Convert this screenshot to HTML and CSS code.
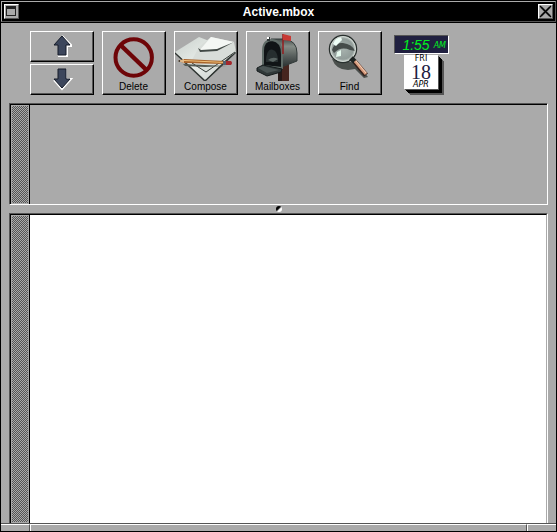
FILE: index.html
```html
<!DOCTYPE html>
<html lang="en">
<head>
    <meta charset="UTF-8">
    <meta name="viewport" content="width=device-width, initial-scale=1.0">
    <title>Active.mbox</title>
    <link rel="stylesheet" href="styles.css">
</head>
<body>
    <div class="window">
        <header class="titlebar">
            <button class="title-button" type="button" aria-label="Miniaturize">
                <svg width="13" height="13" viewBox="0 0 13 13">
                    <path d="M1 1h10v10H1z" fill="#222"/>
                    <path d="M2 4h8v6H2z" fill="#aaa"/>
                </svg>
            </button>
            <h1>Active.mbox</h1>
            <button class="title-button" type="button" aria-label="Close">
                <svg width="13" height="13" viewBox="0 0 13 13">
                    <path d="M2 2l9 9M11 2l-9 9" stroke="#555" stroke-width="2.4"/>
                    <path d="M1 1l11 11M12 1L1 12" stroke="#000" stroke-width="1.2"/>
                </svg>
            </button>
        </header>

        <div class="toolbar">
            <div class="arrows">
                <button class="tool arrow" type="button" aria-label="Previous message">
                    <svg width="61" height="28" viewBox="0 0 61 28">
                        <path d="M31 4l9 9v1h-4v10h-9" fill="none" stroke="#fff" stroke-width="2"/>
                        <path d="M31 4l8 9h-4v10h-8V13h-4z" fill="#3c465c" stroke="#151b28"/>
                    </svg>
                </button>
                <button class="tool arrow" type="button" aria-label="Next message">
                    <svg width="61" height="28" viewBox="0 0 61 28">
                        <path d="M35 4v10h5l-9 10-8-9" fill="none" stroke="#fff" stroke-width="2"/>
                        <path d="M27 4h8v10h4l-8 9-8-9h4z" fill="#3c465c" stroke="#151b28"/>
                    </svg>
                </button>
            </div>

            <button class="tool" type="button">
                <svg width="61" height="48" viewBox="0 0 61 48">
                    <circle cx="30.7" cy="24.5" r="18.2" fill="none" stroke="#6e0508" stroke-width="4"/>
                    <path d="M18 12.500L43.500 37" stroke="#6e0508" stroke-width="4.500"/>
                </svg>
                <span>Delete</span>
            </button>

            <button class="tool" type="button">
                <svg width="61" height="48" viewBox="0 0 61 48">
                    <defs>
                        <linearGradient id="paper" x1="0" y1="0" x2="1" y2="1">
                            <stop offset="0" stop-color="#c9d0cc"/>
                            <stop offset=".5" stop-color="#e9eeea"/>
                            <stop offset="1" stop-color="#c3c8c5"/>
                        </linearGradient>
                    </defs>
                    <path d="M0 21L30 49 61 20V17L31 46 0 19z" fill="#303633"/>
                    <path d="M0 19L24 4 60 18 30 47z" fill="url(#paper)"/>
                    <path d="M24 14L36 4 59 9 61 19 31 40 17 27z" fill="#d8ddd9"/>
                    <path d="M17 30l14 9 29-20" fill="none" stroke="#333a36"/>
                    <path d="M36 4L59 9 45 16 24 18z" fill="#f4f7f4"/>
                    <path d="M23 15l2 4 17-1 17-9-17 7-16 1z" fill="#414945"/>
                    <path d="M8 31l44 2-22 1-20-1z" fill="#545b55"/>
                    <path d="M3 28l6-2 41 2v3L9 30z" fill="#a8642b"/>
                    <path d="M9 27l41 2v1L9 28z" fill="#f0c07a"/>
                    <path d="M3 28l6-2v4z" fill="#deb98c"/>
                    <path d="M3 28l2-1v2z" fill="#222"/>
                    <path d="M48 28h3v4h-3z" fill="#53606e"/>
                    <path d="M51 28h5q2 2 0 4h-5z" fill="#a3282d"/>
                </svg>
                <span>Compose</span>
            </button>

            <button class="tool" type="button">
                <svg width="61" height="48" viewBox="0 0 61 48">
                    <defs>
                        <linearGradient id="metal" x1="0" y1="0" x2="0" y2="1">
                            <stop offset="0" stop-color="#464e4c"/>
                            <stop offset=".25" stop-color="#858c86"/>
                            <stop offset=".6" stop-color="#565d5b"/>
                            <stop offset="1" stop-color="#252c2d"/>
                        </linearGradient>
                    </defs>
                    <path d="M31 33l11-4v19H31z" fill="#46251f"/>
                    <path d="M31 33h4v15h-4z" fill="#251817"/>
                    <path d="M24 6h14q12 2 12 14v8l-18 7-3-20z" fill="url(#metal)" stroke="#333b3a"/>
                    <path d="M16 33V18Q16 7 25 7q10 1 10 14v14z" fill="#101416" stroke="#606c68" stroke-width="2"/>
                    <path d="M19 29c0-9 3-14 7-12 4 1 5 6 5 12z" fill="#262e2f"/>
                    <path d="M21 27q5-4 10-1l-5 3z" fill="#596462"/>
                    <path d="M10 35l6-3 19 4-1 3-14 4-10-5z" fill="#303839" stroke="#151b1c"/>
                    <path d="M11 35l5-2 16 4-12 3z" fill="#4a5454"/>
                    <path d="M36 1v20" stroke="#941d1e" stroke-width="1.500"/>
                    <path d="M36 1l8 2v5l-8-1z" fill="#c83a35"/>
                    <path d="M20 4h3v4h-3z" fill="#303838"/>
                    <path d="M20 4h2v2h-2z" fill="#fff"/>
                </svg>
                <span>Mailboxes</span>
            </button>

            <button class="tool" type="button">
                <svg width="61" height="48" viewBox="0 0 61 48">
                    <defs>
                        <radialGradient id="lens">
                            <stop offset="0" stop-color="#a7b2ae"/>
                            <stop offset=".75" stop-color="#919c99"/>
                            <stop offset="1" stop-color="#d8dfda"/>
                        </radialGradient>
                    </defs>
                    <path d="M13 26q4 11 16 11l7-1 9 9 4-1-11-14z" fill="#4b504d"/>
                    <circle cx="24" cy="16" r="13.500" fill="url(#lens)" stroke="#29302e" stroke-width="1.500"/>
                    <path d="M13 17q2-8 11-7 9 1 12 8l-5-1q-9-4-16 3z" fill="#454c4a"/>
                    <path d="M14 11q2-6 8-7l1 3-6 6z" fill="#effff7"/>
                    <path d="M18 19l4-2v6l-5 1z" fill="#e4f8ed"/>
                    <circle cx="24" cy="16" r="12.500" fill="none" stroke="#d0d8d3"/>
                    <path d="M32 25l4 4" stroke="#1d2322" stroke-width="5"/>
                    <path d="M36 29l11 13" stroke="#35201b" stroke-width="5"/>
                    <path d="M36 28l11 13" stroke="#d79a7b" stroke-width="3"/>
                    <path d="M37 28l10 12" stroke="#f1d0b8"/>
                </svg>
                <span>Find</span>
            </button>

            <div class="clock">
                <div class="time"><span class="digits">1:55</span><span class="ampm">AM</span></div>
                <div class="calendar">
                    <span class="weekday">FRI</span>
                    <span class="day">18</span>
                    <span class="month">APR</span>
                </div>
            </div>
        </div>

        <main class="panes">
            <section class="pane message-list" aria-label="Message list">
                <div class="scroller"></div>
                <div class="content"></div>
            </section>
            <div class="splitter"><span class="knob"></span></div>
            <section class="pane message-body" aria-label="Message">
                <div class="scroller"></div>
                <div class="content"></div>
            </section>
        </main>

        <footer class="resize-bar">
            <div class="corner"></div>
            <div class="middle"></div>
            <div class="corner"></div>
        </footer>
    </div>
</body>
</html>
```
FILE: styles.css
```css
* {
    box-sizing: border-box;
}
body {
    margin: 0;
    font-family: "Liberation Sans", Arial, sans-serif;
    color: #000;
}
svg {
    display: block;
}
.window {
    display: flex;
    flex-direction: column;
    min-height: 100vh;
    background-color: #aaa;
    border: 1px solid #000;
}

/* Title bar */
.titlebar {
    display: flex;
    align-items: center;
    justify-content: space-between;
    height: 21px;
    margin-bottom: 1px;
    padding: 0 2px;
    background-color: #000;
    border: 1px solid #555;
    border-top-color: #aaa;
    border-left-color: #aaa;
    box-shadow: 0 1px 0 #000;
}
.titlebar h1 {
    margin: 0;
    font-size: 12px;
    line-height: 16px;
    color: #fff;
}
.title-button {
    width: 15px;
    height: 15px;
    padding: 0;
    background-color: #aaa;
    border: 1px solid #555;
    border-top-color: #fff;
    border-left-color: #fff;
}

/* Toolbar */
.toolbar {
    display: flex;
    gap: 8px;
    padding: 8px 8px 8px 29px;
}
.arrows {
    display: flex;
    flex-direction: column;
    gap: 2px;
}
.tool {
    width: 64px;
    height: 64px;
    padding: 0 1px 1px 0;
    background-color: #aaa;
    border: 1px solid #000;
    border-top-color: #fff;
    border-left-color: #fff;
    box-shadow: inset -1px -1px 0 #555;
    font-family: inherit;
    font-size: 10px;
    line-height: 12px;
    color: #000;
}
.tool span {
    display: block;
}
.arrow {
    height: 31px;
}

/* Clock and calendar */
.clock {
    display: flex;
    flex-direction: column;
    gap: 1px;
    margin-left: 4px;
    padding-top: 4px;
}
.time {
    display: flex;
    align-items: center;
    justify-content: flex-end;
    gap: 4px;
    width: 55px;
    height: 19px;
    padding-right: 2px;
    background-color: #202040;
    border: 1px solid #fff;
    border-top-color: #555;
    border-left-color: #555;
    color: #00f020;
    font-style: italic;
}
.digits {
    font-family: "Liberation Sans Narrow", "Liberation Sans", sans-serif;
    font-size: 14px;
    line-height: 16px;
}
.ampm {
    font-family: "DejaVu Sans", sans-serif;
    font-size: 8px;
    line-height: 8px;
    padding-top: 2px;
}
.calendar {
    display: flex;
    flex-direction: column;
    align-items: center;
    width: 34px;
    height: 34px;
    margin-left: 10px;
    background-color: #fff;
    box-shadow: 1px 1px 0 #555, 2px 2px 0 #000, 3px 3px 0 #000, 4px 4px 0 #000, 5px 5px 0 #555, 6px 6px 0 #555;
}
.weekday,
.month {
    font-family: "DejaVu Sans", sans-serif;
    font-size: 8px;
    line-height: 8px;
}
.month {
    font-style: italic;
}
.day {
    font-family: "Liberation Serif", serif;
    font-size: 20px;
    line-height: 18px;
    color: #202040;
}

/* Panes */
.panes {
    flex: 1;
    display: flex;
    flex-direction: column;
    padding: 0 8px;
}
.pane {
    display: flex;
    border: 1px solid #fff;
    border-top-color: #555;
    border-left-color: #555;
}
.scroller {
    width: 20px;
    border: 1px solid #000;
    border-bottom: none;
    padding: 1px;
    background: repeating-conic-gradient(#555 0 25%, #aaa 0 50%) 0 0 / 2px 2px content-box;
}
.content {
    flex: 1;
    border-top: 1px solid #000;
}
.message-list {
    height: 102px;
}
.splitter {
    display: flex;
    justify-content: center;
    align-items: center;
    height: 8px;
}
.knob {
    width: 6px;
    height: 6px;
    border-radius: 3px;
    background: linear-gradient(135deg, #000 40%, #fff 60%);
}
.message-body {
    flex: 1;
    border-bottom: none;
}
.message-body .content {
    background-color: #fff;
    border-right: 1px solid #aaa;
}

/* Resize bar */
.resize-bar {
    display: flex;
    height: 8px;
    border-top: 1px solid #555;
}
.resize-bar div {
    border-top: 1px solid #fff;
}
.corner {
    width: 29px;
}
.middle {
    flex: 1;
    border-left: 1px solid #fff;
    border-right: 1px solid #555;
}
.corner:first-child {
    border-right: 1px solid #555;
}
.corner:last-child {
    border-left: 1px solid #fff;
}
```
